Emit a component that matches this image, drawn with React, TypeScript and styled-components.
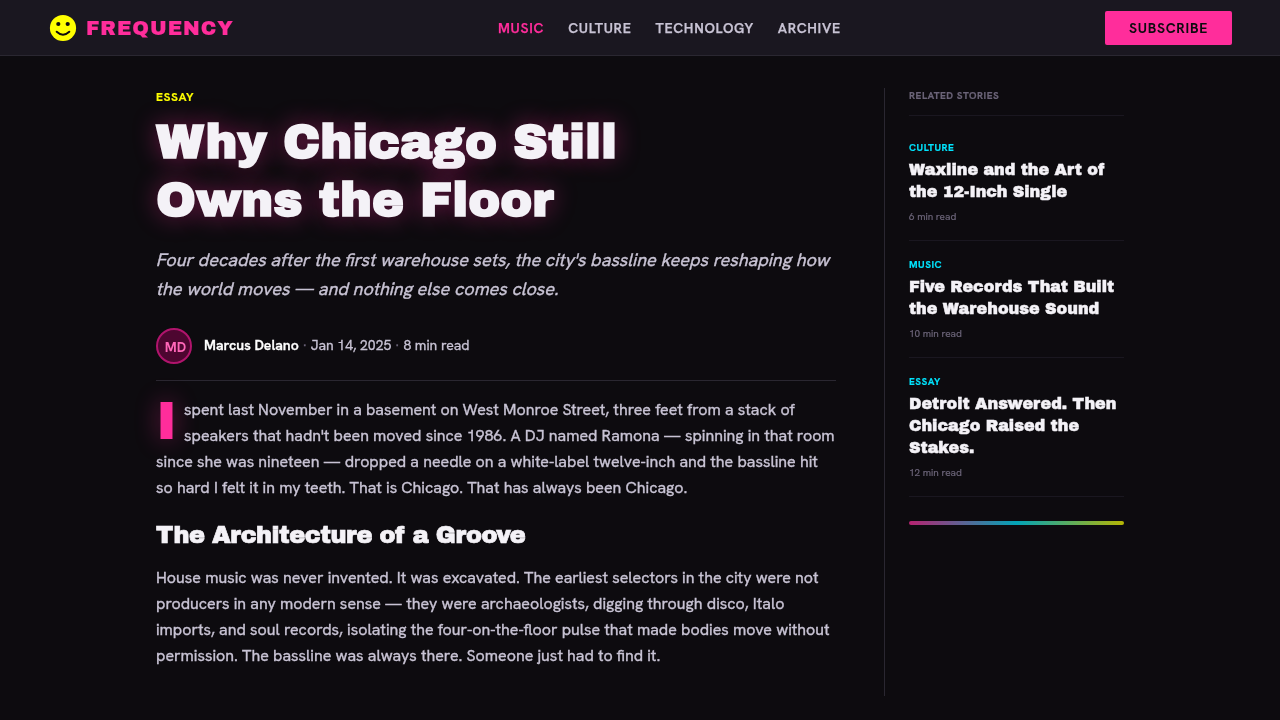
import React from "react";
import styled, { createGlobalStyle } from "styled-components";

const pink = "#ff2d9b";
const ink = "#0d0b0f";
const rule = "#2a2731";
const soft = "#c8c3d4";
const muted = "#6b6478";
const sans = `"Hanken Grotesk", "HK Grotesk", Inter, "Liberation Sans", sans-serif`;
const black = `"Archivo Black", Inter, "Liberation Sans", sans-serif`;

const Global = createGlobalStyle`
  * { box-sizing: border-box; }
  body { margin: 0; background: ${ink}; color: ${soft}; font-family: ${sans}; }
  h1, h2, h3, p { margin: 0; }
`;

const Line = styled.span`
  display: block;
  width: max-content;
  white-space: nowrap;
`;
const SlantedLine = styled(Line)`
  transform: skewX(-14deg);
  transform-origin: 0 20px;
`;

const Page = styled.div`
  min-height: 720px;
  display: flex;
  flex-direction: column;
  -webkit-font-smoothing: antialiased;
  will-change: transform;
`;
const Header = styled.header`
  height: 56px;
  padding: 0 48px 0 49px;
  display: flex;
  align-items: center;
  background: #1a1720;
  border-bottom: 1px solid ${rule};
`;
const Brand = styled.div`
  width: 341px;
  display: flex;
  align-items: center;
  gap: 9px;
  color: ${pink};
  font: 400 20px/28px ${black};
  letter-spacing: 1px;
  -webkit-text-stroke: 0.2px ${pink};
`;
const Nav = styled.nav`
  flex: 1;
  display: flex;
  gap: 24px;
  padding-left: 108px;
`;
const NavLink = styled.a<{ $active?: boolean }>`
  font: 600 14px/20px ${sans};
  letter-spacing: 0.7px;
  color: ${(p) => (p.$active ? pink : soft)};
  -webkit-text-stroke: 0.25px;
`;
const Subscribe = styled.button`
  width: 127px;
  height: 34px;
  padding: 0;
  border: 0;
  border-radius: 2px;
  background: ${pink};
  color: ${ink};
  font: 700 14px/20px ${sans};
  letter-spacing: 0.7px;
`;

const Main = styled.main`
  width: 968px;
  height: 640px;
  margin: 0 auto;
  padding-top: 32px;
  display: flex;
  gap: 48px;
`;
const Article = styled.article`
  width: 680px;
`;
const Kicker = styled.div`
  font: 700 12px/18px ${sans};
  letter-spacing: 0.6px;
  color: #ffff00;
  -webkit-text-stroke: 0.15px;
`;
const Title = styled.h1`
  margin-top: 7px;
  font: 900 48px/58px ${black};
  color: #f4f2f7;
  text-shadow: 0 0 24px rgba(255, 45, 155, 0.4);
`;
const Dek = styled.p`
  margin-top: 16px;
  font: 400 18px/29px ${sans};
  -webkit-text-stroke: 0.35px ${soft};
`;
const Byline = styled.div`
  margin-top: 25px;
  padding-bottom: 16px;
  display: flex;
  align-items: center;
  gap: 12px;
  border-bottom: 1px solid ${rule};
`;
const Avatar = styled.div`
  width: 36px;
  height: 36px;
  padding: 2px 0 0 3px;
  display: flex;
  align-items: center;
  justify-content: center;
  border: 2px solid #b0146c;
  border-radius: 50%;
  background: #4d0630;
  color: #ff66b8;
  font: 700 14px/20px ${sans};
`;
const Meta = styled.div`
  display: flex;
  padding-bottom: 2px;
  font: 400 14px/20px ${sans};
  -webkit-text-stroke: 0.3px;
`;
const Author = styled.strong`
  font-weight: 600;
  color: #fff;
`;
const Dot = styled.span`
  width: 12px;
  text-align: center;
  color: ${muted};
`;
const Body = styled.p<{ $lead?: boolean }>`
  margin-top: ${(p) => (p.$lead ? 16 : 0)}px;
  font: 400 16px/26px ${sans};
  -webkit-text-stroke: 0.35px ${soft};
`;
const DropCap = styled.span`
  float: left;
  width: 28px;
  height: 50px;
  color: ${pink};
  font: 400 54px/48px ${black};
  -webkit-text-stroke: 0;
  text-shadow: 0 0 24px rgba(255, 45, 155, 0.4);
`;
const Section = styled.h2`
  margin: 17px 0 13px;
  font: 400 24px/34px ${black};
  letter-spacing: -0.48px;
  color: #f4f2f7;
  -webkit-text-stroke: 0.7px;
`;

const Sidebar = styled.aside`
  width: 240px;
  padding-left: 24px;
  border-left: 1px solid ${rule};
`;
const SideHead = styled.div`
  height: 28px;
  margin-bottom: 8px;
  border-bottom: 1px solid #1a1720;
  font: 700 10px/15px ${sans};
  letter-spacing: 0.5px;
  color: ${muted};
  -webkit-text-stroke: 0.2px;
`;
const StoryCard = styled.div`
  padding: 16px 0;
  border-bottom: 1px solid #1a1720;
`;
const StoryTag = styled.div`
  font: 700 10px/15px ${sans};
  letter-spacing: 0.5px;
  color: #00e5ff;
  -webkit-text-stroke: 0.15px;
`;
const StoryTitle = styled.h3`
  margin: 4px 0 6px;
  font: 400 16px/22px ${black};
  color: #f4f2f7;
  -webkit-text-stroke: 0.45px;
`;
const StoryTime = styled.div`
  font: 400 10px/15px ${sans};
  color: ${muted};
  -webkit-text-stroke: 0.2px ${muted};
`;
const Spectrum = styled.div`
  height: 4px;
  margin-top: 24px;
  border-radius: 2px;
  opacity: 0.7;
  background: linear-gradient(90deg, ${pink}, #00e5ff, #ffff00);
`;

const Smiley = () => (
  <svg width="28" height="28" viewBox="0 0 28 28">
    <circle cx="14" cy="14" r="13.1" fill="#ffff00" />
    <circle cx="9.3" cy="10" r="2.1" fill={ink} />
    <circle cx="18.7" cy="10" r="2.1" fill={ink} />
    <path d="M7.7 17.8 Q14 23.6 20.3 17.8" fill="none" stroke={ink} strokeWidth="2" strokeLinecap="round" />
  </svg>
);

const stories = [
  { tag: "CULTURE", title: ["Waxline and the Art of", "the 12-Inch Single"], time: "6 min read" },
  { tag: "MUSIC", title: ["Five Records That Built", "the Warehouse Sound"], time: "10 min read" },
  { tag: "ESSAY", title: ["Detroit Answered. Then", "Chicago Raised the", "Stakes."], time: "12 min read" },
];

export default function App() {
  return (
    <Page>
      <Global />
      <Header>
        <Brand>
          <Smiley />
          <Line>FREQUENCY</Line>
        </Brand>
        <Nav>
          <NavLink $active>MUSIC</NavLink>
          <NavLink>CULTURE</NavLink>
          <NavLink>TECHNOLOGY</NavLink>
          <NavLink>ARCHIVE</NavLink>
        </Nav>
        <Subscribe>SUBSCRIBE</Subscribe>
      </Header>
      <Main>
        <Article>
          <Kicker>ESSAY</Kicker>
          <Title>
            <Line>Why Chicago Still</Line>
            <Line>Owns the Floor</Line>
          </Title>
          <Dek>
            <SlantedLine>Four decades after the first warehouse sets, the city's bassline keeps reshaping how</SlantedLine>
            <SlantedLine>the world moves — and nothing else comes close.</SlantedLine>
          </Dek>
          <Byline>
            <Avatar>MD</Avatar>
            <Meta>
              <Author>Marcus Delano</Author>
              <Dot>·</Dot>
              <span>Jan 14, 2025</span>
              <Dot>·</Dot>
              <span>8 min read</span>
            </Meta>
          </Byline>
          <Body $lead>
            <DropCap>I</DropCap>
            <Line>spent last November in a basement on West Monroe Street, three feet from a stack of</Line>
            <Line>speakers that hadn't been moved since 1986. A DJ named Ramona — spinning in that room</Line>
            <Line>since she was nineteen — dropped a needle on a white-label twelve-inch and the bassline hit</Line>
            <Line>so hard I felt it in my teeth. That is Chicago. That has always been Chicago.</Line>
          </Body>
          <Section>The Architecture of a Groove</Section>
          <Body>
            <Line>House music was never invented. It was excavated. The earliest selectors in the city were not</Line>
            <Line>producers in any modern sense — they were archaeologists, digging through disco, Italo</Line>
            <Line>imports, and soul records, isolating the four-on-the-floor pulse that made bodies move without</Line>
            <Line>permission. The bassline was always there. Someone just had to find it.</Line>
          </Body>
        </Article>
        <Sidebar>
          <SideHead>RELATED STORIES</SideHead>
          {stories.map((s) => (
            <StoryCard key={s.tag}>
              <StoryTag>{s.tag}</StoryTag>
              <StoryTitle>
                {s.title.map((t) => (
                  <Line key={t}>{t}</Line>
                ))}
              </StoryTitle>
              <StoryTime>{s.time}</StoryTime>
            </StoryCard>
          ))}
          <Spectrum />
        </Sidebar>
      </Main>
    </Page>
  );
}
